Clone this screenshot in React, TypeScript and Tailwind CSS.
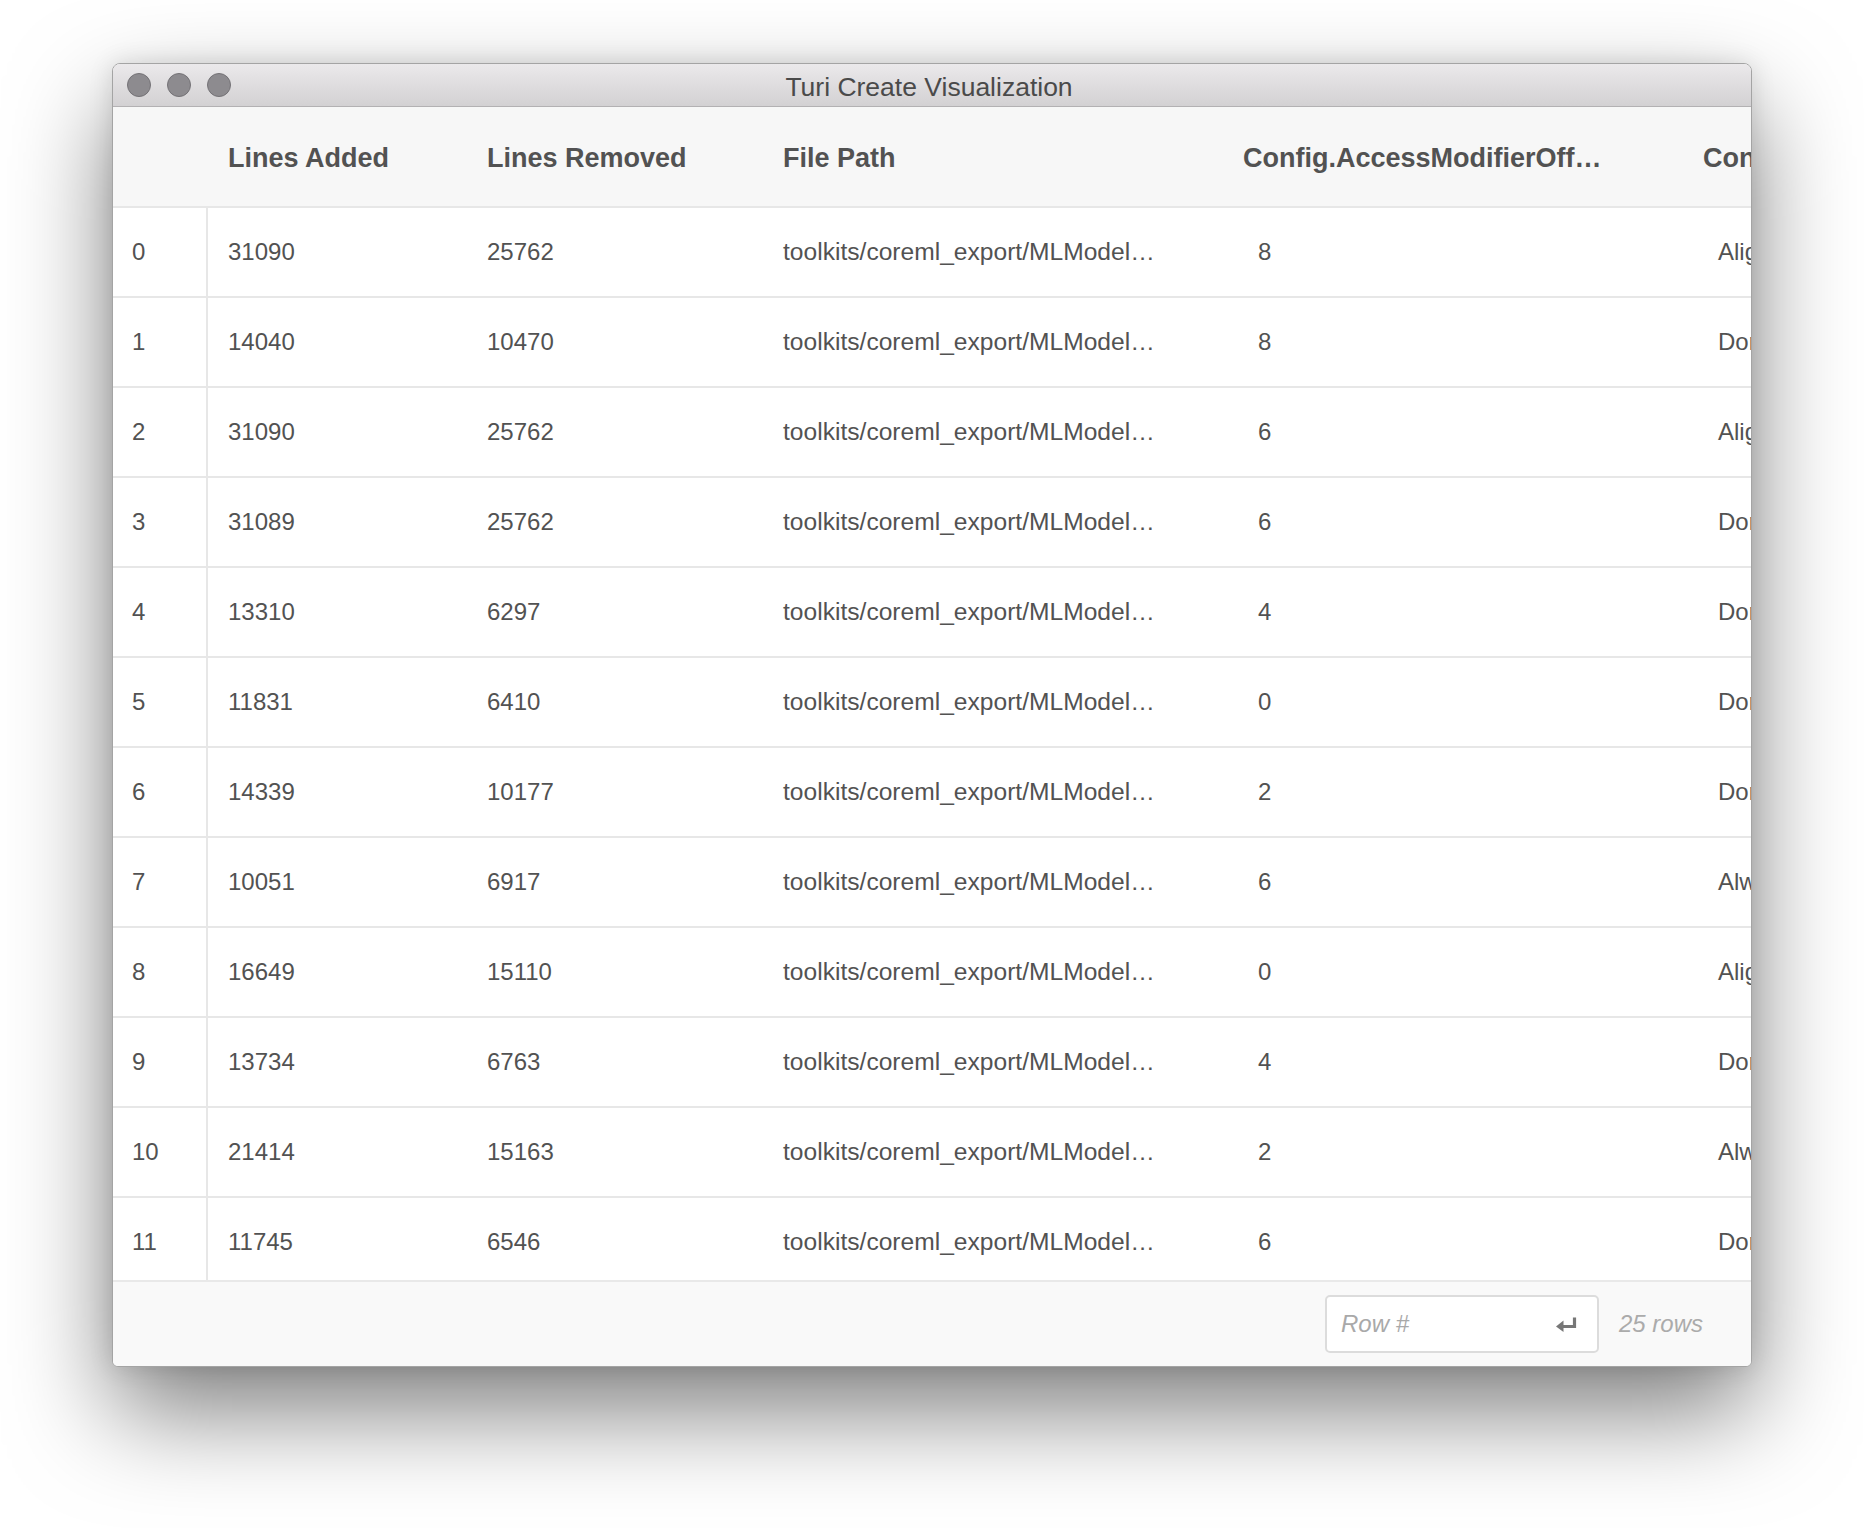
import React from "react";

const rows: [number, number, number, string, number, string][] = [
  [0, 31090, 25762, "toolkits/coreml_export/MLModel…", 8, "Align"],
  [1, 14040, 10470, "toolkits/coreml_export/MLModel…", 8, "DontAlign"],
  [2, 31090, 25762, "toolkits/coreml_export/MLModel…", 6, "Align"],
  [3, 31089, 25762, "toolkits/coreml_export/MLModel…", 6, "DontAlign"],
  [4, 13310, 6297, "toolkits/coreml_export/MLModel…", 4, "DontAlign"],
  [5, 11831, 6410, "toolkits/coreml_export/MLModel…", 0, "DontAlign"],
  [6, 14339, 10177, "toolkits/coreml_export/MLModel…", 2, "DontAlign"],
  [7, 10051, 6917, "toolkits/coreml_export/MLModel…", 6, "Always"],
  [8, 16649, 15110, "toolkits/coreml_export/MLModel…", 0, "Align"],
  [9, 13734, 6763, "toolkits/coreml_export/MLModel…", 4, "DontAlign"],
  [10, 21414, 15163, "toolkits/coreml_export/MLModel…", 2, "Always"],
  [11, 11745, 6546, "toolkits/coreml_export/MLModel…", 6, "DontAlign"],
];

function EnterIcon() {
  return (
    <svg width="21" height="15" viewBox="0 0 21 15" className="shrink-0">
      <path d="M18.5 0.5 V9.5 H7" stroke="#777777" strokeWidth="3.2" fill="none" />
      <polygon points="0,9.5 7.5,3.5 7.5,15" fill="#777777" />
    </svg>
  );
}

export default function App() {
  return (
    <div className="w-[1864px] h-[1528px] bg-white pl-[112px] pt-[63px] font-['Liberation_Sans',Arial,sans-serif] overflow-hidden">
      <div className="w-[1640px] h-[1304px] flex flex-col rounded-t-[8px] rounded-b-[6px] border border-[#a4a4a4] overflow-hidden bg-white shadow-[0_45px_100px_rgba(0,0,0,0.5),0_0_24px_rgba(0,0,0,0.12)]">
        {/* Title bar */}
        <div className="relative h-[43px] shrink-0 flex items-center justify-center bg-gradient-to-b from-[#ebe9eb] to-[#d3d1d3] border-b border-[#b3b1b3]">
          <div className="absolute left-[14px] top-[9px] flex gap-[16px]">
            <div className="w-[24px] h-[24px] rounded-full bg-[#8d8b8f] border border-[#747276]" />
            <div className="w-[24px] h-[24px] rounded-full bg-[#8d8b8f] border border-[#747276]" />
            <div className="w-[24px] h-[24px] rounded-full bg-[#8d8b8f] border border-[#747276]" />
          </div>
          <span className="text-[26.5px] leading-none text-[#4a4a4a] -ml-[6px] mt-[4px]">Turi Create Visualization</span>
        </div>

        {/* Header */}
        <div className="h-[101px] shrink-0 flex items-center pt-[4px] bg-[#f7f7f7] border-b-2 border-[#e7e7e7] text-[27px] font-bold text-[#525252] whitespace-nowrap overflow-hidden">
          <div className="w-[95px] shrink-0" />
          <div className="w-[259px] shrink-0 pl-[20px]">Lines Added</div>
          <div className="w-[296px] shrink-0 pl-[20px]">Lines Removed</div>
          <div className="w-[460px] shrink-0 pl-[20px]">File Path</div>
          <div className="w-[460px] shrink-0 pl-[20px]">Config.AccessModifierOff…</div>
          <div className="w-[460px] shrink-0 pl-[20px]">Config.AlignAfterOpenBracket</div>
        </div>

        {/* Body */}
        <div className="flex-1 overflow-hidden text-[24px] text-[#525252]">
          {rows.map((r) => (
            <div key={r[0]} className="h-[90px] flex border-b-2 border-[#e7e7e7] whitespace-nowrap">
              <div className="w-[95px] shrink-0 flex items-center pl-[19px] border-r-2 border-[#e7e7e7]">{r[0]}</div>
              <div className="w-[259px] shrink-0 flex items-center pl-[20px]">{r[1]}</div>
              <div className="w-[296px] shrink-0 flex items-center pl-[20px]">{r[2]}</div>
              <div className="w-[460px] shrink-0 flex items-center pl-[20px] text-[24.6px]">{r[3]}</div>
              <div className="w-[460px] shrink-0 flex items-center pl-[35px]">{r[4]}</div>
              <div className="w-[460px] shrink-0 flex items-center pl-[35px]">{r[5]}</div>
            </div>
          ))}
        </div>

        {/* Footer */}
        <div className="h-[86px] shrink-0 flex items-center justify-end gap-[20px] pr-[48px] bg-[#f9f9f9] border-t-2 border-[#e9e9e9]">
          <div className="w-[274px] h-[58px] flex items-center justify-between pl-[14px] pr-[20px] bg-white border-2 border-[#dcdcdc] rounded-[5px]">
            <span className="italic text-[24px] text-[#a9a9a9]">Row #</span>
            <EnterIcon />
          </div>
          <span className="italic text-[24px] text-[#ababab]">25 rows</span>
        </div>
      </div>
    </div>
  );
}
